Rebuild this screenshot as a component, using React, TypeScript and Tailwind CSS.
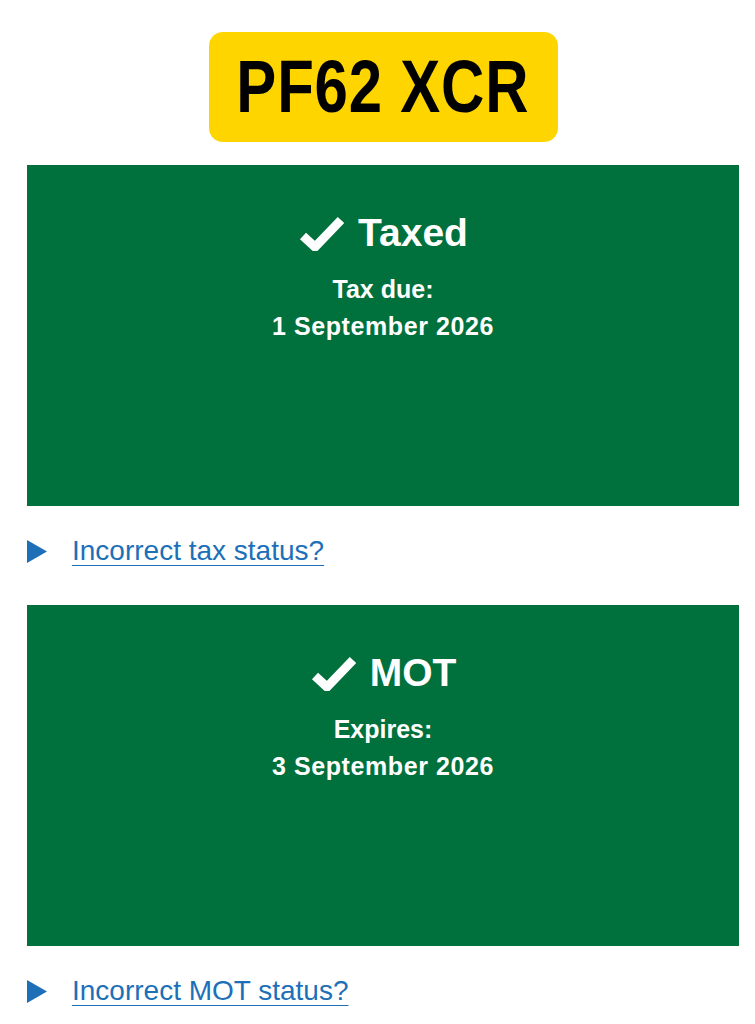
const FONT = "font-['Liberation_Sans',Arial,sans-serif]";

function Tick() {
  return (
    <svg width="48" height="36" viewBox="0 0 48 36" aria-hidden="true">
      <path d="M5 21 L17 32 L43 5" fill="none" stroke="#ffffff" strokeWidth="9" strokeLinejoin="miter" />
    </svg>
  );
}

function StatusPanel({ title, label, date }: { title: string; label: string; date: string }) {
  return (
    <div className="flex h-[341px] flex-col items-center bg-[#00703c] pt-[44px] text-white">
      <div className="flex items-center gap-[12px]">
        <Tick />
        <h2 className="text-[39px] font-bold leading-[47px]">{title}</h2>
      </div>
      <p className="mt-[15px] text-center text-[25px] font-bold leading-[37px]">
        {label}
        <br />
        <span className="tracking-[0.6px]">{date}</span>
      </p>
    </div>
  );
}

function DetailsLink({ text }: { text: string }) {
  return (
    <div className="flex h-[32px] items-center gap-[25px]">
      <svg width="20" height="23" viewBox="0 0 20 23" aria-hidden="true">
        <path d="M0 0 L20 11.5 L0 23 Z" fill="#1d70b8" />
      </svg>
      <a
        href="#"
        className="text-[28px] leading-[32px] text-[#1d70b8] underline decoration-1 underline-offset-[5px]"
      >
        {text}
      </a>
    </div>
  );
}

export default function App() {
  return (
    <main className={`min-h-screen bg-white pl-[27px] pr-[16px] pt-[32px] ${FONT}`}>
      <div className="flex justify-center">
        <div className="flex h-[110px] w-[349px] items-center justify-center overflow-hidden rounded-[14px] bg-[#ffd500]">
          <span className="inline-block shrink-0 scale-x-[0.81] whitespace-nowrap text-[74px] font-bold leading-none tracking-[1px] text-black">
            PF62 XCR
          </span>
        </div>
      </div>

      <div className="mt-[23px]">
        <StatusPanel title="Taxed" label="Tax due:" date="1 September 2026" />
      </div>
      <div className="mt-[29px]">
        <DetailsLink text="Incorrect tax status?" />
      </div>

      <div className="mt-[38px]">
        <StatusPanel title="MOT" label="Expires:" date="3 September 2026" />
      </div>
      <div className="mt-[29px]">
        <DetailsLink text="Incorrect MOT status?" />
      </div>
    </main>
  );
}
